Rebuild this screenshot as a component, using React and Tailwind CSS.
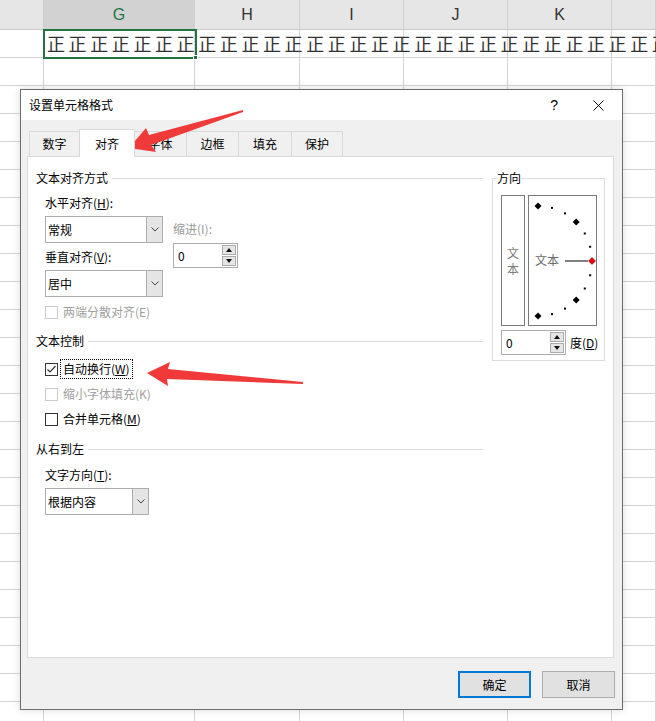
import React from 'react';

const cols = [44, 151, 105, 104, 104, 104, 44];
const heads = ['', 'G', 'H', 'I', 'J', 'K', ''];

const Chevron = () => (
  <svg width="8" height="5" viewBox="0 0 8 5">
    <polyline points="0.5,0.5 4,4 7.5,0.5" fill="none" stroke="#444" strokeWidth="1" />
  </svg>
);

const Select = ({ value, width, height = 27 }) => (
  <div
    className="flex border border-[#acacac] bg-white"
    style={{ width, height }}
  >
    <div className="flex flex-1 items-center pl-[2px] text-[12px] text-black">{value}</div>
    <div className="flex w-[16px] items-center justify-center border-l border-[#acacac] bg-[#e5e5e5]">
      <Chevron />
    </div>
  </div>
);

const Spin = ({ width }) => (
  <div className="flex h-[25px] items-center border border-[#acacac] bg-white pr-[1px]" style={{ width }}>
    <div className="flex-1 pl-[4px] text-[12px] text-black">0</div>
    <div className="flex flex-col gap-[1px]">
      <div className="flex h-[10px] w-[14px] items-center justify-center border border-[#acacac] bg-[#e5e5e5]">
        <svg width="6" height="4" viewBox="0 0 6 4"><polygon points="3,0 6,4 0,4" fill="#111" /></svg>
      </div>
      <div className="flex h-[10px] w-[14px] items-center justify-center border border-[#acacac] bg-[#e5e5e5]">
        <svg width="6" height="4" viewBox="0 0 6 4"><polygon points="0,0 6,0 3,4" fill="#111" /></svg>
      </div>
    </div>
  </div>
);

const Check = ({ checked, disabled, children, focus, className = '' }) => (
  <div className={`flex items-center ${className}`}>
    <div
      className={`flex h-[13px] w-[13px] items-center justify-center border bg-white ${
        disabled ? 'border-[#cccccc]' : 'border-[#333333]'
      }`}
    >
      {checked && (
        <svg width="11" height="11" viewBox="0 0 11 11">
          <polyline points="1.5,5.5 4,8 9.5,2" fill="none" stroke="#333" strokeWidth="1.2" />
        </svg>
      )}
    </div>
    <div
      className={`ml-[2px] px-[2px] text-[12px] leading-[18px] ${
        disabled ? 'text-[#a0a0a0]' : 'text-black'
      } ${focus ? 'border border-dotted border-black' : 'border border-transparent'}`}
    >
      {children}
    </div>
  </div>
);

const Heading = ({ children, className = '' }) => (
  <div className={`flex h-[16px] items-center ${className}`}>
    <span className="text-[12px] leading-[16px] text-black">{children}</span>
    <div className="ml-[4px] h-px flex-1 bg-[#dcdcdc]" />
  </div>
);

const Arc = () => {
  const cx = 9;
  const cy = 65;
  const marks = [];
  for (let i = 0; i <= 12; i++) {
    const a = (i * 15 * Math.PI) / 180;
    const x = cx + 54 * Math.sin(a);
    const y = cy - 55 * Math.cos(a);
    if (i === 6) {
      marks.push(<polygon key={i} points={`${x},${y - 3.5} ${x + 3.5},${y} ${x},${y + 3.5} ${x - 3.5},${y}`} fill="#e00000" stroke="#700" strokeWidth="0.5" />);
    } else if (i % 3 === 0) {
      marks.push(<polygon key={i} points={`${x},${y - 3.5} ${x + 3.5},${y} ${x},${y + 3.5} ${x - 3.5},${y}`} fill="#000" />);
    } else {
      marks.push(<rect key={i} x={x - 1} y={y - 1} width="2" height="2" fill="#000" />);
    }
  }
  return (
    <svg width="67" height="129" viewBox="0 0 67 129" className="absolute left-0 top-0">
      <line x1="36" y1="65" x2="59" y2="65" stroke="#000" strokeWidth="1" />
      {marks}
    </svg>
  );
};

export default function App() {
  return (
    <div className="relative h-[721px] w-[656px] overflow-hidden bg-white font-['Noto_Sans_CJK_SC',sans-serif]">
      {/* sheet header */}
      <div className="flex h-[30px] border-b border-[#c6c6c6] bg-[#e6e6e6]">
        {cols.map((w, i) => (
          <div
            key={i}
            className={`flex items-center justify-center border-r border-[#cfcfcf] font-['Liberation_Sans',sans-serif] text-[16px] ${
              heads[i] === 'G' ? 'bg-[#d2d2d2] text-[#217346]' : 'text-[#333]'
            }`}
            style={{ width: w }}
          >
            {heads[i]}
          </div>
        ))}
      </div>
      {/* rows */}
      {Array.from({ length: 25 }).map((_, r) => (
        <div key={r} className="relative flex h-[28px] border-b border-[#d4d4d4]">
          {cols.map((w, i) => (
            <div key={i} className="h-full border-r border-[#d4d4d4]" style={{ width: w }} />
          ))}
          {r === 0 && (
            <div className="absolute left-[47px] right-0 top-0 flex h-full items-center overflow-hidden whitespace-nowrap text-[18px] tracking-[3.6px] text-[#333]">
              {'正'.repeat(29)}
            </div>
          )}
        </div>
      ))}
      {/* selection */}
      <div className="absolute left-[43px] top-[29px] h-[30px] w-[154px] border-2 border-[#217346]" />
      <div className="absolute left-[193px] top-[55px] h-[5px] w-[5px] border border-white bg-[#217346]" />

      {/* dialog */}
      <div className="absolute left-[20px] top-[89px] flex h-[621px] w-[603px] flex-col border border-[#6d6d6d] bg-[#f0f0f0] shadow-[0_0_8px_rgba(0,0,0,0.15)]">
        <div className="flex h-[30px] items-center bg-white pl-[8px] pr-[18px]">
          <span className="text-[12px] text-black">设置单元格格式</span>
          <span className="ml-auto font-['Liberation_Sans',sans-serif] text-[14px] text-black">?</span>
          <svg width="11" height="11" viewBox="0 0 11 11" className="ml-[35px]">
            <path d="M0.5 0.5 L10.5 10.5 M10.5 0.5 L0.5 10.5" stroke="#111" strokeWidth="1" />
          </svg>
        </div>

        {/* tabs */}
        <div className="ml-[8px] mt-[9px] flex h-[27px] items-end">
          {[
            ['数字', 51],
            ['对齐', 56, true],
            ['字体', 53],
            ['边框', 53],
            ['填充', 54],
            ['保护', 52],
          ].map(([t, w, active]) =>
            active ? (
              <div
                key={t}
                className="relative z-10 -mb-px -ml-px flex h-[28px] items-center justify-center border-x border-t border-[#d9d9d9] bg-white text-[12px] text-black"
                style={{ width: w }}
              >
                {t}
              </div>
            ) : (
              <div
                key={t}
                className="-ml-px flex h-[25px] items-center justify-center border-x border-t border-[#d9d9d9] bg-[#f0f0f0] text-[12px] text-black first:ml-0"
                style={{ width: w }}
              >
                {t}
              </div>
            )
          )}
        </div>

        {/* panel */}
        <div className="ml-[6px] flex h-[502px] w-[587px] border border-[#d9d9d9] bg-white pl-[8px]">
          <div className="mt-[13px] w-[447px]">
            <Heading>文本对齐方式</Heading>
            <div className="ml-[9px] mt-[9px] flex">
              <div>
                <div className="h-[16px] text-[12px] leading-[16px] text-black">
                  水平对齐(<u>H</u>):
                </div>
                <div className="mt-[5px]">
                  <Select value="常规" width={118} />
                </div>
                <div className="mt-[6px] h-[16px] text-[12px] leading-[16px] text-black">
                  垂直对齐(<u>V</u>):
                </div>
                <div className="mt-[5px]">
                  <Select value="居中" width={118} />
                </div>
              </div>
              <div className="ml-[10px]">
                <div className="mt-[26px] h-[16px] text-[12px] leading-[16px] text-[#9a9a9a]">缩进(I):</div>
                <div className="mt-[6px]">
                  <Spin width={65} />
                </div>
              </div>
            </div>
            <Check disabled className="ml-[9px] mt-[5px]">两端分散对齐(E)</Check>

            <Heading className="mt-[11px]">文本控制</Heading>
            <Check checked focus className="ml-[9px] mt-[10px]">
              自动换行(<u>W</u>)
            </Check>
            <Check disabled className="ml-[9px] mt-[5px]">缩小字体填充(K)</Check>
            <Check className="ml-[9px] mt-[5px]">
              合并单元格(<u>M</u>)
            </Check>

            <Heading className="mt-[12px]">从右到左</Heading>
            <div className="ml-[9px] mt-[10px] h-[16px] text-[12px] leading-[16px] text-black">
              文字方向(<u>T</u>):
            </div>
            <div className="ml-[9px] mt-[5px]">
              <Select value="根据内容" width={104} height={27} />
            </div>
          </div>

          {/* orientation */}
          <fieldset className="ml-[9px] mt-[13px] h-[191px] w-[113px] border border-[#dcdcdc] pl-[8px]">
            <legend className="-ml-[4px] text-[12px] leading-[16px] text-black">方向</legend>
            <div className="mt-[9px] flex">
              <div className="flex h-[131px] w-[24px] flex-col items-center justify-center border border-[#7a7a7a] text-[12px] leading-[16px] text-[#7a7a7a]">
                <span>文</span>
                <span>本</span>
              </div>
              <div className="relative ml-[3px] h-[131px] w-[69px] border border-[#7a7a7a]">
                <Arc />
                <div className="absolute left-[6px] top-[56px] text-[12px] leading-[16px] text-[#6a6a6a]">文本</div>
              </div>
            </div>
            <div className="mt-[4px] flex items-center">
              <Spin width={65} />
              <span className="ml-[4px] text-[12px] text-black">
                度(<u>D</u>)
              </span>
            </div>
          </fieldset>
        </div>

        {/* footer buttons */}
        <div className="mr-[7px] mt-[13px] flex justify-end gap-[11px]">
          <div className="flex h-[27px] w-[73px] items-center justify-center border-2 border-[#0078d7] bg-[#e1e1e1] text-[12px] text-black">
            确定
          </div>
          <div className="flex h-[27px] w-[73px] items-center justify-center border border-[#adadad] bg-[#e1e1e1] text-[12px] text-black">
            取消
          </div>
        </div>
      </div>

      {/* annotation arrows */}
      <svg width="656" height="721" className="pointer-events-none absolute left-0 top-0">
        <polygon
          points="129,148 146,128 149,135 243,110 243,112 151,145 156,152"
          fill="#f03a3a"
        />
        <polygon
          points="147,373 170,362 168,369 303,382 303,384 167,379 168,386"
          fill="#f03a3a"
        />
      </svg>
    </div>
  );
}
